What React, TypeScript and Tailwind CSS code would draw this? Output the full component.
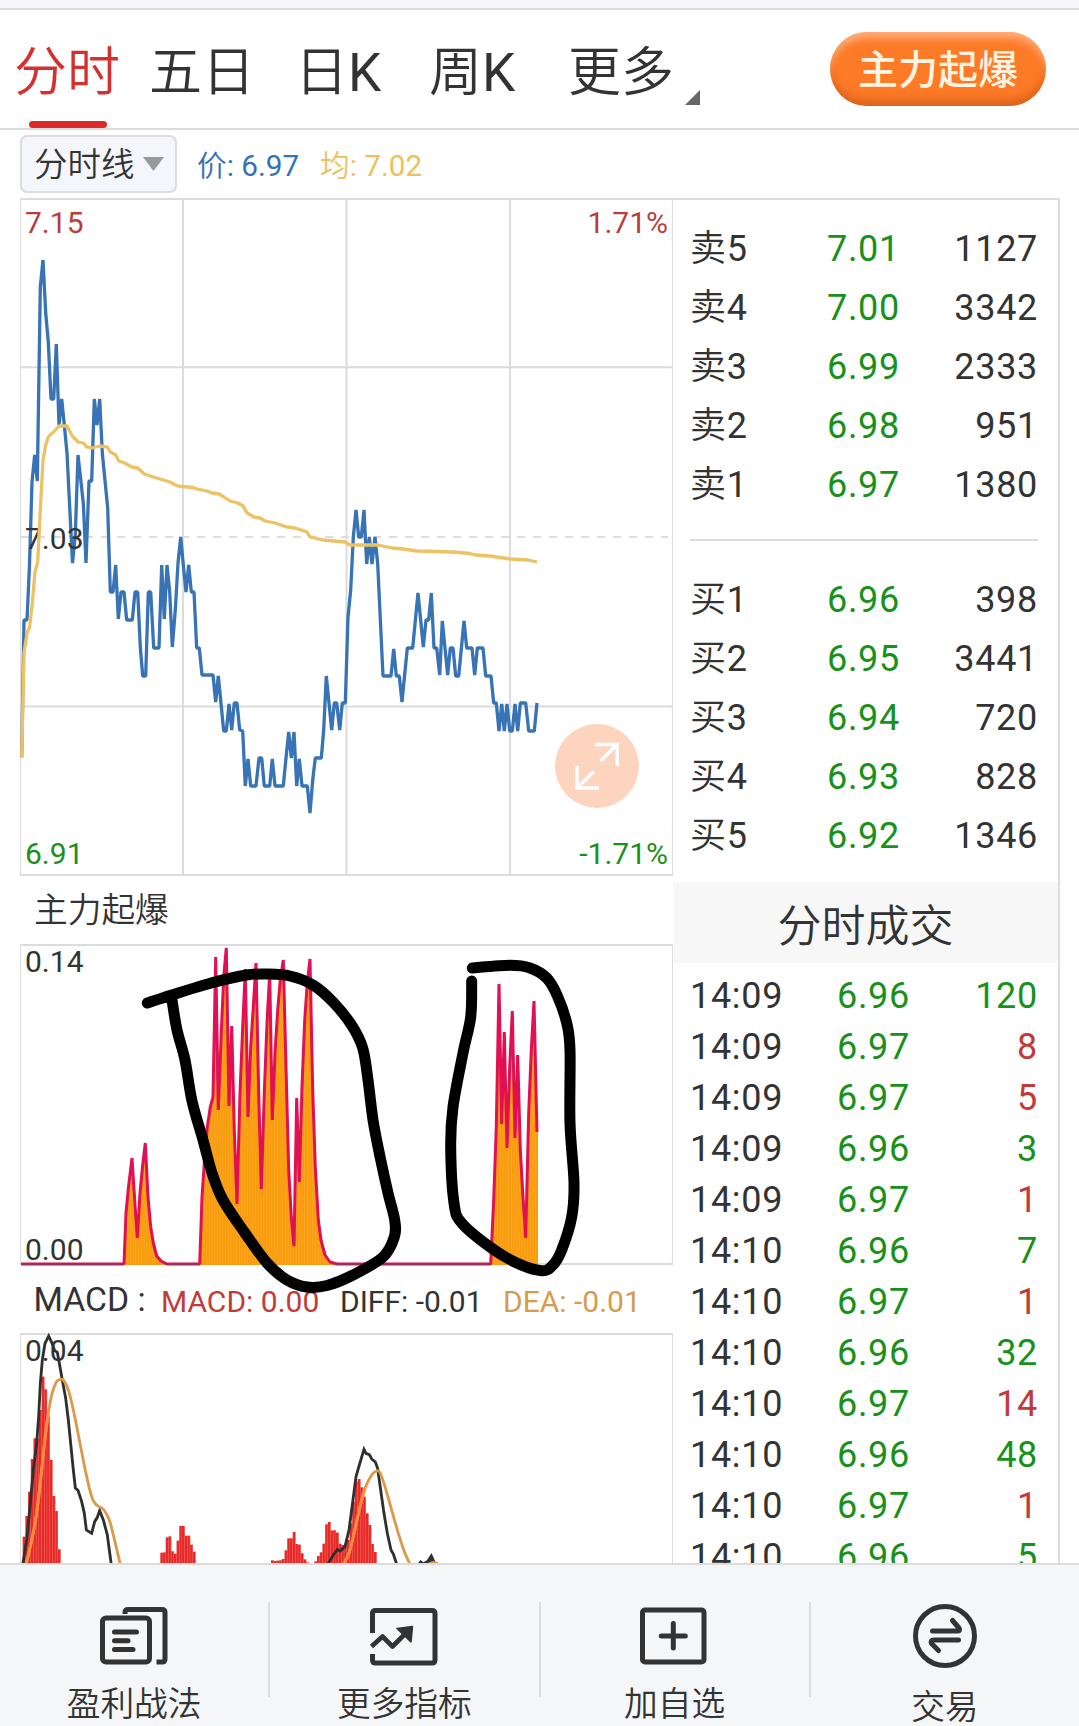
import React from "react";

type Pt = [number, number];

const toPts = (s: string): Pt[] => s.trim().split(/\s+/).map((p) => p.split(",").map(Number) as Pt);

/** Catmull-Rom spline through the points, as an SVG path. */
const smooth = (s: string) => {
  const p = toPts(s);
  let d = `M${p[0][0]} ${p[0][1]}`;
  for (let i = 0; i < p.length - 1; i++) {
    const a = p[Math.max(i - 1, 0)];
    const b = p[i];
    const c = p[i + 1];
    const e = p[Math.min(i + 2, p.length - 1)];
    d += `C${b[0] + (c[0] - a[0]) / 6} ${b[1] + (c[1] - a[1]) / 6} ${c[0] - (e[0] - b[0]) / 6} ${c[1] - (e[1] - b[1]) / 6} ${c[0]} ${c[1]}`;
  }
  return d;
};

const PRICE =
  "21.7,757 24,620 27,620 29.5,565 32,482 34.7,455 37.3,481 40.3,287 43,260 45.7,313 48.3,342 51,399 53.7,399 56.3,344 59,425 61.7,399 64.3,425 67,453 72.5,563 75.3,535 78,455 83.3,503 86,563 89,481 91.7,481 94.3,399 97,425 99.7,399 102.3,453 107.7,508 110.3,592 113,592 115.7,565 118.3,619 121,592 124,592 126.7,620 132.3,620 135,592 137.7,592 140.3,647 142.7,676 145.7,676 148.3,592 150.7,592 153.7,648 159,648 161.7,565 164.3,619 167,565 169.7,592 172.3,647 175.3,610 178,563 180.7,537 183.3,565 186,592 188.7,565 191.3,592 194,592 196.7,648 199.3,648 202,675 213,675 215.7,702 218.3,676 223.7,731 226.3,731 229,704 231.7,730 234.3,703 237,703 239.7,730 242.7,731 245.3,786 248,759 250.7,786 256,786 259,758 261.7,758 264.3,786 269.7,786 272.3,759 275,786 283.3,786 286,758 288.7,732 291.3,758 294,732 296.7,786 299.3,759 302,786 307.3,786 310,813 312.7,780 315.3,758 321.3,758 323.7,730 326.3,676 329,703 331.7,730 334.3,703 336.7,703 339.7,730 342.3,703 345.3,703 348,617 350.7,590 353.3,537 356,510 358.7,537 361.3,537 364,510 366.7,564 369.3,537 372,564 375,537 377.7,564 383,676 391,676 393.7,649 396.3,676 399.3,676 402,702 407.3,648 412.7,648 418,593 423.3,647 426,620 428.7,620 431.3,593 434,648 436.7,648 439.7,675 442.3,621 447.7,675 450.3,648 453,648 455.7,676 458.7,676 464,621 466.7,648 472,648 474.7,675 477.3,648 483,648 485.7,676 491,676 493.7,703 496.3,703 499,731 501.7,704 504.3,731 507,704 509.7,731 512.3,731 515,704 517.7,731 520.3,703 525.7,703 528.7,731 534.3,731 537,703";

const AVERAGE =
  "21.7,758 24,653 27,633 29.7,627 32.3,603 35,572 37.7,562 40.3,510 43,460 45.7,445 48.3,437 51,434 53.7,432 59,426 67,426 72.3,436 78,442 83.3,443 86.7,447 91.7,448 99.7,446 107.3,447 110.3,452 115.7,455 118.7,461 124.7,463 131.7,467 137.7,468 144.3,474 153.3,477 170,482 177.7,486 193,487.5 197,489 207,491 212,493 219,494 224,497 230,501 238,503 243,506 247,513 254,517 260,518 265,521 275,523 287,527 295,528 307,532 310,537 323,540 345,542 350,545 378,545 392,548 403,549 417,551 453,552 470,553.5 475,555 490,556 510,559 528,560 537,562";

const BURST =
  "21,1264 124,1264 126,1213 128.5,1187 132,1158 134.7,1200 137.3,1238 140,1193 142.7,1165 145.3,1143 148,1197 150.7,1227 153.3,1243 156.7,1256 161,1261 167,1264 199.7,1264 202,1197 204.7,1157 207.3,1127 210.3,1107 213,1097 215.7,957 218.3,1110 221,1040 223.7,977 226.3,948 229,1106 231.7,1026 234.3,1130 237,1204 240,1093 242.7,1027 245.3,969 248,1117 250.7,1047 253.3,1007 256,963 258.7,1093 261.3,1189 264.3,1093 267,1023 269.7,973 272.3,1120 275,1053 277.7,1010 280.3,980 283.3,960 286,1067 288.7,1170 291.3,1217 294,1246 296.7,1098 299.3,1182 302,1087 304.7,1020 307.3,983 310,959 312.7,1090 315.3,1167 318.3,1220 321,1240 325,1255 330,1262 337,1264 490.7,1264 493.7,1200 496.3,1127 499,984 501.7,1124 504.3,1032 507,1148 509.7,1067 512.3,1011 515,1138 517.7,1055 520.3,1150 523,1197 525.7,1238 528.7,1113 531.3,1050 534,1001 537,1132";

const LOOP_A =
  "147.3,1003 171.7,995 213,982.5 246.7,975 266.7,974 290,976 313,985 333,1002 351.5,1025 362.7,1048 368,1080 373,1120 380,1156.5 388,1193 394.7,1220 394.3,1237 383,1257 353,1275 327,1285.5 307,1287 287,1280 267,1263 245,1233 223,1200 212,1173 203,1140 192,1101 185,1060 177,1030 172,1000";
const LOOP_B =
  "472.3,968 510,965.3 530,968 546.7,978 557,995 566.7,1023 570,1050 570,1123 574,1183 571.7,1217 561.7,1250 553,1265 541.7,1270.7 516.7,1263 490,1247 461.7,1223 454,1203 450.7,1147 453,1107 463,1053 470.7,1017 471.7,981";

/* MACD geometry is kept in thirds of a pixel. */
const DIFF_LINES = [
  "68,765 80,690 90,590 100,480 110,400 116,320 121,220 127,150 135,100 146,78 155,97 164,122 172,127 178,160 186,205 197,265 205,330 212,400 220,480 226,534 234,541 245,575 253,610 259,660 275,670 284,635 292,622 299,602 310,630 322,675 328,720 334,765",
  "982,765 1000,735 1012,719 1020,723 1035,710 1047,660 1055,600 1068,500 1078,465 1092,418 1098,430 1108,434 1116,448 1126,456 1133,475 1142,540 1152,610 1162,670 1173,720 1180,732 1192,768",
  "1255,765 1262,756 1270,762 1284,754 1294,738 1306,765",
];
const DEA_LINES = [
  "78,765 92,705 105,640 115,570 125,480 135,385 145,310 155,255 168,218 178,209 190,210 205,240 220,300 240,400 260,500 275,560 285,580 297,590 312,600 328,630 340,675 352,725 362,768",
  "1028,765 1045,735 1060,680 1080,590 1095,535 1115,495 1130,483 1140,488 1155,530 1175,600 1195,670 1215,730 1232,766",
  "1284,764 1300,757 1318,764",
];
const BAR_GROUPS: [number, number[]][] = [
  [68, [680, 618, 545, 447, 385, 385, 300, 200, 238, 320, 450, 558, 603, 718]],
  [481, [728, 727, 682, 679, 724, 731, 692, 648, 648, 677, 677, 704, 725]],
  [813, [751, 753, 752, 751, 747, 721, 685, 685, 666, 702, 704, 730, 748, 757]],
  [943, [754, 738, 727, 701, 643, 636, 661, 661, 668, 701, 705, 705, 690, 640, 575, 515, 507, 532, 560, 610, 645, 702, 726]],
];

const SELL = [
  ["卖5", "7.01", "1127"],
  ["卖4", "7.00", "3342"],
  ["卖3", "6.99", "2333"],
  ["卖2", "6.98", "951"],
  ["卖1", "6.97", "1380"],
];
const BUY = [
  ["买1", "6.96", "398"],
  ["买2", "6.95", "3441"],
  ["买3", "6.94", "720"],
  ["买4", "6.93", "828"],
  ["买5", "6.92", "1346"],
];
const TRADES: [string, string, string, boolean][] = [
  ["14:09", "6.96", "120", false],
  ["14:09", "6.97", "8", true],
  ["14:09", "6.97", "5", true],
  ["14:09", "6.96", "3", false],
  ["14:09", "6.97", "1", true],
  ["14:10", "6.96", "7", false],
  ["14:10", "6.97", "1", true],
  ["14:10", "6.96", "32", false],
  ["14:10", "6.97", "14", true],
  ["14:10", "6.96", "48", false],
  ["14:10", "6.97", "1", true],
  ["14:10", "6.96", "5", false],
];

function Header() {
  return (
    <header className="border-b-2 border-[#dcdcdc]">
      <div className="h-[10px] border-b-2 border-[#dcdcdc] bg-[#f5f6fa]" />
      <div className="flex h-[118px] items-center whitespace-nowrap pl-[14px] text-[53px]">
        <div className="relative flex h-full w-[105px] items-center font-[350] text-[#d5302f]">
          <span className="pt-[10px]">分时</span>
          <span className="absolute bottom-0 left-[15px] h-[7px] w-[78px] rounded-full bg-[#dc2b2b]" />
        </div>
        <span className="ml-[30px] w-[146px] pt-[10px] font-[350]">五日</span>
        <span className="w-[134px] pt-[10px]">
          <span className="font-[350]">日</span>K
        </span>
        <span className="w-[139px] pt-[10px]">
          <span className="font-[350]">周</span>K
        </span>
        <span className="w-[117px] pt-[10px] font-[350]">更多</span>
        <svg className="mt-[57px] h-[15px] w-[15px]" viewBox="0 0 15 15">
          <path d="M15 0V15H0Z" fill="#666" />
        </svg>
        <button className="ml-auto mr-[33px] flex h-[74px] w-[216px] items-center justify-center rounded-full bg-[#fd7a26] pt-[4px] text-[40px] font-medium text-[#fff4e2] shadow-[inset_0_9px_8px_-3px_rgba(255,205,170,0.65),inset_0_-9px_9px_-3px_rgba(190,80,20,0.55)]">
          主力起爆
        </button>
      </div>
    </header>
  );
}

function Toolbar() {
  return (
    <div className="flex h-[68px] items-start pl-[20px] pt-[5px] text-[29.7px]">
      <div className="flex h-[58px] w-[157px] items-center rounded-[7px] border-2 border-[#dcdcdc] bg-[#f5f6fb] pl-[12px] text-[33.5px] font-[350]">
        <span className="pt-[3px]">分时线</span>
        <svg className="ml-[8px] h-[14px] w-[21px]" viewBox="0 0 21 14">
          <path d="M0 0H21L10.5 14Z" fill="#999" />
        </svg>
      </div>
      <span className="ml-[20px] mt-[9px] w-[123px] text-[#3572b0]">
        <span className="font-[350]">价</span>: 6.97
      </span>
      <span className="mt-[9px] text-[#ecc05f]">
        <span className="font-[350]">均</span>: 7.02
      </span>
    </div>
  );
}

function PriceChart() {
  return (
    <svg className="block h-[678px] w-[653px]" viewBox="20 200 653 678" fontSize="30">
      <g fill="none" stroke="#dcdcdc" strokeWidth="2">
        <path d="M20.5 198V875M672.5 198V875" strokeWidth="1.2" />
        <path d="M20 875H673M20 367.3H673M20 706.5H673M183 198V875M346.5 198V875M510 198V875" />
        <path d="M21 537H668" strokeDasharray="8 8" />
      </g>
      <polyline points={PRICE} fill="none" stroke="#3873b5" strokeWidth="3.300" strokeLinejoin="bevel" />
      <text x="25" y="233" fill="#b93d3b">7.15</text>
      <text x="668" y="233" fill="#b93d3b" textAnchor="end">1.71%</text>
      <text x="25" y="549" fill="#333">7.03</text>
      <text x="25" y="864" fill="#1a901a">6.91</text>
      <text x="668" y="864" fill="#1a901a" textAnchor="end">-1.71%</text>
      <polyline points={AVERAGE} fill="none" stroke="#ecc264" strokeWidth="3.300" strokeLinejoin="round" />
      <circle cx="597" cy="766" r="42" fill="#fdd5bf" />
      <path d="M595 744.500H617.200V766M617 744.500L600.500 761M577 766V788H599M577 788L594 771.500" fill="none" stroke="#fff" strokeWidth="3.600" />
    </svg>
  );
}

function BurstChart() {
  const stripes: number[] = [];
  for (let x = 125; x < 538; x += 2.72) stripes.push(x);
  return (
    <svg className="block h-[323px] w-[653px]" viewBox="20 944 653 323" fontSize="30">
      <defs>
        <clipPath id="burst-area">
          <polygon points={`${BURST} 538,1132 538,1265 21,1265`} />
        </clipPath>
      </defs>
      <path d="M20.5 945V1264M672.5 945V1264" stroke="#dcdcdc" strokeWidth="1.2" />
      <path d="M20 945H673M20 1264H673" stroke="#dcdcdc" strokeWidth="2" />
      <g clipPath="url(#burst-area)">
        <rect x="20" y="944" width="520" height="321" fill="#fb9b09" />
        {stripes.map((x) => (
          <path key={x} d={`M${x} 944V1265`} stroke="#f5b03c" strokeWidth="0.6" />
        ))}
      </g>
      <polyline points={BURST} fill="none" stroke="#e01052" strokeWidth="3" strokeLinejoin="bevel" />
      <path d="M21 1264H123M165 1264H199M336 1264H490" stroke="#97305f" strokeWidth="2" />
      <text x="25" y="971.500" fill="#333">0.14</text>
      <text x="25" y="1259.500" fill="#333">0.00</text>
    </svg>
  );
}

function MacdChart() {
  return (
    <svg className="block h-[230px] w-[653px]" viewBox="20 1333 653 230" fontSize="30">
      <path d="M20.500 1334V1563M672.500 1334V1563" stroke="#dcdcdc" strokeWidth="1.2" />
      <path d="M20 1334H673" stroke="#dcdcdc" strokeWidth="2" />
      <text x="25" y="1361" fill="#333">0.04</text>
      <g transform="translate(0 1310) scale(0.33333)" fill="none" strokeWidth="8.500">
        {BAR_GROUPS.map(([x0, tops]) =>
          tops.map((t, i) => (
            <g key={`${x0}-${i}`}>
              <rect x={x0 + i * 8.13} y={t} width="8.13" height={762 - t} fill="#e62a28" />
              <rect x={x0 + i * 8.13 + 7} y={t} width="1.4" height={762 - t} fill="#f06660" />
            </g>
          ))
        )}
        {DIFF_LINES.map((d) => (
          <polyline key={d} points={d} stroke="#2f2f2f" />
        ))}
        <path d="M1284 762L1294 738L1308 762Z" fill="#333" />
        {DEA_LINES.map((d) => (
          <path key={d} d={smooth(d)} stroke="#dc9a48" />
        ))}
        <path d={smooth(DEA_LINES[0].split(" ").slice(0, 7).join(" "))} stroke="#ff8a3c" />
        <path d={smooth(DEA_LINES[1].split(" ").slice(0, 5).join(" "))} stroke="#ff8a3c" />
      </g>
    </svg>
  );
}

function Charts() {
  return (
    <div className="relative w-[653px] shrink-0">
      <PriceChart />
      <div className="flex h-[66px] items-center pl-[14px] pt-px text-[33.7px] font-[350]">
        <span>主力起爆</span>
      </div>
      <BurstChart />
      <div className="flex h-[66px] items-center whitespace-nowrap text-[30px]">
        <span className="w-[140px] shrink-0 pl-[13.5px] text-[33.7px]">MACD :</span>
        <span className="w-[180px] shrink-0 pl-px pt-[3px] text-[#c33b38]">MACD: 0.00</span>
        <span className="w-[163px] shrink-0 pt-[3px]">DIFF: -0.01</span>
        <span className="pt-[3px] text-[#d79b4c]">DEA: -0.01</span>
      </div>
      <MacdChart />
      <svg className="absolute left-0 top-[744px] h-[360px] w-[653px]" viewBox="20 944 653 360" fill="none" stroke="#000" strokeWidth="11" strokeLinecap="round" strokeLinejoin="round">
        <path d={smooth(LOOP_A)} />
        <path d={smooth(LOOP_B)} />
      </svg>
    </div>
  );
}

function DepthRows({ rows }: { rows: string[][] }) {
  return (
    <>
      {rows.map(([name, price, volume]) => (
        <div key={name} className="flex h-[59px] items-center">
          <span className="w-[137px]">
            <span className="font-[350]">{name[0]}</span>
            {name[1]}
          </span>
          <span className="text-[#17911a]">{price}</span>
          <span className="ml-auto">{volume}</span>
        </div>
      ))}
    </>
  );
}

function SidePanel() {
  return (
    <div className="flex-1 text-[36px] tracking-[0.7px]">
      <div className="h-[682px] pl-[17px] pr-[20px] pt-[19px]">
        <DepthRows rows={SELL} />
        <div className="mb-[29px] mt-[25px] h-[2px] bg-[#dcdcdc]" />
        <DepthRows rows={BUY} />
      </div>
      <div className="flex h-[81px] items-center justify-center bg-[#f7f7f7] text-[44px] font-[350] tracking-normal">
        <span className="pt-[8px]">分时成交</span>
      </div>
      <div className="pl-[17px] pr-[20px] pt-[7px]">
        {TRADES.map(([time, price, amount, up], i) => (
          <div key={i} className="flex h-[51px] items-center">
            <span className="w-[147px]">{time}</span>
            <span className="text-[#17911a]">{price}</span>
            <span className={up ? "ml-auto text-[#c23a37]" : "ml-auto text-[#17911a]"}>{amount}</span>
          </div>
        ))}
      </div>
    </div>
  );
}

const ICONS = [
  <svg key="a" className="h-[66px] w-[70px]" viewBox="0 0 70 66" fill="none" stroke="#333" strokeWidth="5" strokeLinecap="round">
    <rect x="3.500" y="16" width="47" height="44" rx="3.500" />
    <path d="M26 12V10.500Q26 7.500 29 7.500H63Q66 7.500 66 10.500V57Q66 60 63 60H57.500" strokeLinecap="butt" />
    <path d="M15.500 30H37.500M15.500 38.800H29M15.500 47.500H34" />
  </svg>,
  <svg key="b" className="h-[66px] w-[70px]" viewBox="0 0 70 66" fill="none" stroke="#333" strokeWidth="5">
    <path d="M3.500 31V11.500Q3.500 8.500 6.500 8.500H63Q66 8.500 66 11.500V58Q66 61 63 61H6.500Q3.500 61 3.500 58V52" />
    <path d="M2.500 44.500L13.500 34.500L23.500 44.500L35 33" strokeWidth="4.600" strokeLinejoin="round" />
    <path d="M28 26.500L43.500 24.500L42 40Z" fill="#333" strokeWidth="1.500" strokeLinejoin="round" />
  </svg>,
  <svg key="c" className="h-[66px] w-[70px]" viewBox="0 0 70 66" fill="none" stroke="#333" strokeWidth="5" strokeLinecap="round">
    <rect x="2.500" y="8" width="61.500" height="52" rx="2.500" />
    <path d="M33.300 21.500V46M21.300 34H45.300" />
  </svg>,
  <svg key="d" className="h-[66px] w-[70px]" viewBox="0 0 70 66" fill="none" stroke="#333" strokeWidth="5" strokeLinecap="round" strokeLinejoin="round">
    <circle cx="35" cy="34" r="29.500" />
    <path d="M22.500 29H47Q51 29 49 26L42.500 18.500M48.500 38H24Q20 38 21.500 41.500L28.500 48.500" />
  </svg>,
];
const LABELS = ["盈利战法", "更多指标", "加自选", "交易"];

function Footer() {
  return (
    <footer className="flex h-[163px] overflow-hidden border-t-2 border-[#dcdcdc] bg-[#f5f6f8]">
      {LABELS.map((label, i) => (
        <React.Fragment key={label}>
          {i > 0 && <div className="mt-[37px] h-[95px] w-[2px] shrink-0 bg-[#dcdcdc]" />}
          <div className="flex flex-1 flex-col items-center pt-[37px] text-[33.7px] font-[350] leading-none">
            {ICONS[i]}
            <span className={i === 3 ? "mt-[23px]" : "mt-[20px]"}>{label}</span>
          </div>
        </React.Fragment>
      ))}
    </footer>
  );
}

export default function App() {
  return (
    <div className="flex h-[1726px] w-[1079px] flex-col overflow-hidden bg-white font-[Roboto,'Noto_Sans_CJK_SC',sans-serif] text-[#333]">
      <Header />
      <Toolbar />
      <main className="ml-[20px] flex h-[1365px] w-[1040px] overflow-hidden border-r-2 border-t-2 border-[#dcdcdc]">
        <Charts />
        <SidePanel />
      </main>
      <Footer />
    </div>
  );
}
